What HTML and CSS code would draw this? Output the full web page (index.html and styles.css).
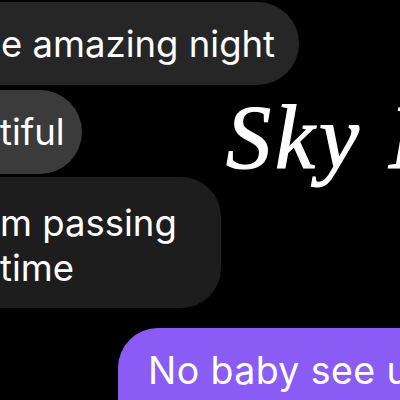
FILE: index.html
```html
<!DOCTYPE html>
<html>
<head>
<meta charset="utf-8">
<link rel="stylesheet" href="styles.css">
</head>
<body>
<div class="chat">
  <div class="bubble b1">e amazing night</div>
  <div class="bubble b2">tiful</div>
  <div class="bubble b3">m passing<br>time</div>
  <div class="bubble me">No baby see u</div>
</div>
<div class="title">Sky L</div>
</body>
</html>
```
FILE: styles.css
```css
html, body {
  margin: 0;
  padding: 0;
  background: #000;
  width: 400px;
  height: 400px;
  overflow: hidden;
}
body {
  position: relative;
  font-family: Inter, "Noto Sans", sans-serif;
  color: #fff;
}
.chat {
  display: flex;
  flex-direction: column;
  align-items: flex-start;
  padding-top: 2px;
}
.bubble {
  font-size: 36.5px;
  line-height: 45px;
  white-space: nowrap;
  box-sizing: border-box;
}
.b1 {
  background: #262626;
  height: 83px;
  width: 299px;
  padding: 20px 0 0 1px;
  border-radius: 0 42px 42px 0;
}
.b2 {
  margin-top: 5px;
  background: #3b3b3b;
  height: 84px;
  width: 82px;
  padding: 20px 0 0 0;
  border-radius: 0 42px 42px 0;
}
.b3 {
  margin-top: 3px;
  background: #1d1d1d;
  height: 131px;
  width: 221px;
  padding: 24px 0 0 0;
  border-radius: 0 40px 40px 0;
}
.me {
  margin-top: 20px;
  margin-left: 118px;
  background: #8a5cf5;
  height: 90px;
  width: 320px;
  padding: 20px 0 0 30px;
  border-radius: 40px 0 0 0;
  font-size: 37.5px;
  letter-spacing: 0.4px;
}
.title {
  position: absolute;
  left: 226px;
  top: 88px;
  font-family: "Liberation Serif", serif;
  font-style: italic;
  font-size: 90px;
  line-height: 100px;
  white-space: nowrap;
  letter-spacing: 4px;
  -webkit-text-stroke: 1.2px #fff;
}
```
